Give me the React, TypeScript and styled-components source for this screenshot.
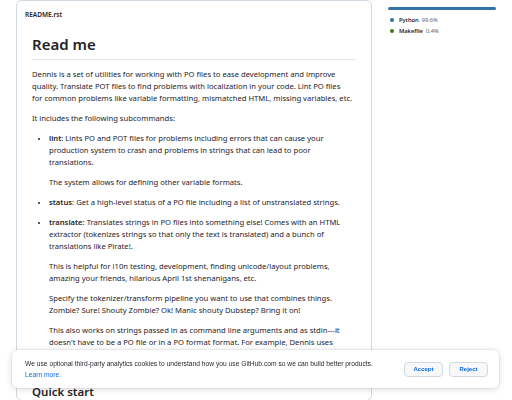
import React from "react";
import styled, { createGlobalStyle } from "styled-components";

const Global = createGlobalStyle`
  html, body { margin: 0; padding: 0; background: #ffffff; }
  body {
    font-family: "Noto Sans", "Liberation Sans", Arial, sans-serif;
    color: #1f2328;
    width: 512px;
    height: 400px;
    overflow: hidden;
  }
  * { box-sizing: border-box; }
`;

const Page = styled.div`
  display: flex;
  align-items: flex-start;
  padding-left: 16px;
  gap: 16px;
`;

const Card = styled.section`
  width: 356px;
  flex: none;
  border: 1px solid #d1d9e0;
  border-radius: 6px;
  background: #fff;
`;

const CardHeader = styled.div`
  height: 27px;
  display: flex;
  align-items: center;
  padding-left: 8px;
  font-size: 6.5px;
  font-weight: 600;
  color: #1f2328;
`;

const Article = styled.article`
  padding: 6px 15px 0 15px;
  font-size: 7.65px;
  line-height: 12px;
  color: #1f2328;
`;

const H1 = styled.h1`
  margin: 0 0 8px;
  font-size: 15px;
  line-height: 20px;
  font-weight: 600;
  padding-bottom: 5px;
  border-bottom: 1px solid #e6e9ec;
`;

const H2 = styled.h2`
  margin: 23px 0 0;
  font-size: 11.5px;
  line-height: 17px;
  font-weight: 600;
`;

const P = styled.p`
  margin: 0 0 8px;
  white-space: nowrap;
`;

const Strong = styled.strong`
  font-weight: 600;
`;

const List = styled.ul`
  margin: 0 0 8px;
  padding-left: 17px;
  list-style: disc;
  & > li { margin-top: 8px; }
  & > li:first-child { margin-top: 0; }
  & > li::marker { font-size: 6px; }
  & p:last-child { margin-bottom: 0; }
`;

const Sidebar = styled.aside`
  width: 108px;
  flex: none;
  padding-top: 7px;
`;

const Bar = styled.div`
  display: flex;
  height: 3px;
  border-radius: 2px;
  overflow: hidden;
  margin-bottom: 4px;
`;

const Seg = styled.span<{ $c: string }>`
  display: block;
  height: 100%;
  background: ${(p) => p.$c};
`;

const LangList = styled.ul`
  list-style: none;
  margin: 0;
  padding: 0 0 0 2px;
`;

const Lang = styled.li`
  display: flex;
  align-items: center;
  height: 11px;
  font-size: 5.7px;
  color: #59636e;
`;

const Dot = styled.span<{ $c: string }>`
  width: 4px;
  height: 4px;
  border-radius: 50%;
  background: ${(p) => p.$c};
  margin-right: 5px;
`;

const LangName = styled.span`
  font-weight: 600;
  color: #1f2328;
  margin-right: 3px;
`;

const Banner = styled.div`
  position: fixed;
  left: 12px;
  right: 13px;
  top: 350px;
  height: 38px;
  background: #fff;
  border-radius: 6px;
  box-shadow: 0 1px 6px rgba(31, 35, 40, 0.18), 0 0 0 1px rgba(31, 35, 40, 0.04);
  display: flex;
  align-items: center;
  padding: 0 11px 0 13px;
`;

const BannerText = styled.div`
  flex: 1;
  max-width: 356px;
  font-family: "Liberation Sans", Arial, sans-serif;
  font-size: 6.7px;
  line-height: 11px;
  color: #1f2328;
`;

const Link = styled.a`
  color: #0969da;
  text-decoration: none;
`;

const Buttons = styled.div`
  margin-left: auto;
  display: flex;
  gap: 6px;
`;

const Btn = styled.button`
  width: 39px;
  height: 15px;
  padding: 0;
  border: 1px solid #d1d9e0;
  border-radius: 4px;
  background: #f6f8fa;
  color: #0969da;
  font-family: "Liberation Sans", Arial, sans-serif;
  font-size: 6px;
  font-weight: 700;
`;

export default function App() {
  return (
    <>
      <Global />
      <Page>
        <Card>
          <CardHeader>README.rst</CardHeader>
          <Article>
            <H1>Read me</H1>
            <P>
              Dennis is a set of utilities for working with PO files to ease development and improve
              <br />
              quality. Translate POT files to find problems with localization in your code. Lint PO files
              <br />
              for common problems like variable formatting, mismatched HTML, missing variables, etc.
            </P>
            <P>It includes the following subcommands:</P>
            <List>
              <li>
                <P>
                  <Strong>lint</Strong>: Lints PO and POT files for problems including errors that can cause your
                  <br />
                  production system to crash and problems in strings that can lead to poor
                  <br />
                  translations.
                </P>
                <P>The system allows for defining other variable formats.</P>
              </li>
              <li>
                <P>
                  <Strong>status</Strong>: Get a high-level status of a PO file including a list of unstranslated strings.
                </P>
              </li>
              <li>
                <P>
                  <Strong>translate</Strong>: Translates strings in PO files into something else! Comes with an HTML
                  <br />
                  extractor (tokenizes strings so that only the text is translated) and a bunch of
                  <br />
                  translations like Pirate!.
                </P>
                <P>
                  This is helpful for l10n testing, development, finding unicode/layout problems,
                  <br />
                  amazing your friends, hilarious April 1st shenanigans, etc.
                </P>
                <P>
                  Specify the tokenizer/transform pipeline you want to use that combines things.
                  <br />
                  Zombie? Sure! Shouty Zombie? Ok! Manic shouty Dubstep? Bring it on!
                </P>
                <P>
                  This also works on strings passed in as command line arguments and as stdin---it
                  <br />
                  doesn't have to be a PO file or in a PO format format. For example, Dennis uses
                  <br />
                  itself to translate its own help text.
                </P>
              </li>
            </List>
            <H2>Quick start</H2>
          </Article>
        </Card>
        <Sidebar>
          <Bar>
            <Seg $c="#3572A5" style={{ width: "99.6%" }} />
            <Seg $c="#427819" style={{ width: "0.4%" }} />
          </Bar>
          <LangList>
            <Lang>
              <Dot $c="#3572A5" />
              <LangName>Python</LangName>99.6%
            </Lang>
            <Lang>
              <Dot $c="#427819" />
              <LangName>Makefile</LangName>0.4%
            </Lang>
          </LangList>
        </Sidebar>
      </Page>
      <Banner>
        <BannerText>
          We use optional third-party analytics cookies to understand how you use GitHub.com so we can build better
          products. <Link href="#">Learn more.</Link>
        </BannerText>
        <Buttons>
          <Btn>Accept</Btn>
          <Btn>Reject</Btn>
        </Buttons>
      </Banner>
    </>
  );
}
